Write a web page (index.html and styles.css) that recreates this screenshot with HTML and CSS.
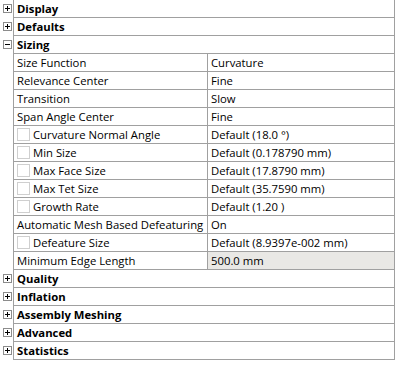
FILE: index.html
```html
<!DOCTYPE html>
<html>
<head>
  <meta charset="UTF-8"/>
  <title>Mesh details</title>
  <link rel="stylesheet" href="styles.css">
</head>
<body>
<div id="details">
  <div class="row grp"><span class="gut"><i class="exp"></i></span><div class="body">Display</div></div>
  <div class="row grp"><span class="gut"><i class="exp"></i></span><div class="body">Defaults</div></div>
  <div class="row grp open"><span class="gut"><i class="exp"></i></span><div class="body">Sizing</div></div>

  <div class="row"><span class="gut"></span><div class="body"><span class="name">Size Function</span><span class="val">Curvature</span></div></div>
  <div class="row"><span class="gut"></span><div class="body"><span class="name">Relevance Center</span><span class="val">Fine</span></div></div>
  <div class="row"><span class="gut"></span><div class="body"><span class="name">Transition</span><span class="val">Slow</span></div></div>
  <div class="row"><span class="gut"></span><div class="body"><span class="name">Span Angle Center</span><span class="val">Fine</span></div></div>
  <div class="row"><span class="gut"></span><div class="body"><span class="name"><i class="chk"></i>Curvature Normal Angle</span><span class="val">Default (18.0 °)</span></div></div>
  <div class="row"><span class="gut"></span><div class="body"><span class="name"><i class="chk"></i>Min Size</span><span class="val">Default (0.178790 mm)</span></div></div>
  <div class="row"><span class="gut"></span><div class="body"><span class="name"><i class="chk"></i>Max Face Size</span><span class="val">Default (17.8790 mm)</span></div></div>
  <div class="row"><span class="gut"></span><div class="body"><span class="name"><i class="chk"></i>Max Tet Size</span><span class="val">Default (35.7590 mm)</span></div></div>
  <div class="row"><span class="gut"></span><div class="body"><span class="name"><i class="chk"></i>Growth Rate</span><span class="val">Default (1.20 )</span></div></div>
  <div class="row"><span class="gut"></span><div class="body"><span class="name">Automatic Mesh Based Defeaturing</span><span class="val">On</span></div></div>
  <div class="row"><span class="gut"></span><div class="body"><span class="name"><i class="chk"></i>Defeature Size</span><span class="val">Default (8.9397e-002 mm)</span></div></div>
  <div class="row"><span class="gut"></span><div class="body"><span class="name">Minimum Edge Length</span><span class="val ro">500.0 mm</span></div></div>

  <div class="row grp"><span class="gut"><i class="exp"></i></span><div class="body">Quality</div></div>
  <div class="row grp"><span class="gut"><i class="exp"></i></span><div class="body">Inflation</div></div>
  <div class="row grp"><span class="gut"><i class="exp"></i></span><div class="body">Assembly Meshing</div></div>
  <div class="row grp"><span class="gut"><i class="exp"></i></span><div class="body">Advanced</div></div>
  <div class="row grp"><span class="gut"><i class="exp"></i></span><div class="body">Statistics</div></div>
</div>
</body>
</html>
```

FILE: styles.css
```css
:root{
  --line: #a0a0a0;
}
body{
  margin: 0;
  background: white;
  color: black;
  font-family: "Open Sans", "Noto Sans", sans-serif;
  font-size: 11.3px;
}
#details{
  width: 395px;
}
.row{
  display: flex;
  height: 18px;
}
.gut{
  width: 13px;
  flex: none;
  position: relative;
}
.body{
  flex: 1;
  display: flex;
  align-items: center;
  border-left: 1px solid var(--line);
  border-right: 1px solid var(--line);
  border-bottom: 1px solid var(--line);
  line-height: 17px;
  white-space: nowrap;
  overflow: hidden;
}
.grp .body{
  font-weight: bold;
  padding-left: 3px;
}
.name{
  width: 190px;
  flex: none;
  padding-left: 3px;
  height: 17px;
  display: flex;
  align-items: center;
  border-right: 1px solid var(--line);
  overflow: hidden;
}
.val{
  flex: 1;
  height: 17px;
  padding-left: 3px;
  display: flex;
  align-items: center;
}
.val.ro{
  background: #e9e8e5;
}

/* expander box */
.exp{
  position: absolute;
  left: 3px;
  top: 4px;
  width: 7px;
  height: 7px;
  border: 1px solid #8c8c8c;
  background: white;
}
.exp::before, .exp::after{
  content: "";
  position: absolute;
  background: black;
}
.exp::before{
  left: 1px; top: 3px;
  width: 5px; height: 1px;
}
.exp::after{
  left: 3px; top: 1px;
  width: 1px; height: 5px;
}
.open .exp::after{display: none}

.chk{
  width: 11px;
  height: 11px;
  border: 1px solid #cfcfcf;
  margin-right: 3px;
  flex: none;
}
```
